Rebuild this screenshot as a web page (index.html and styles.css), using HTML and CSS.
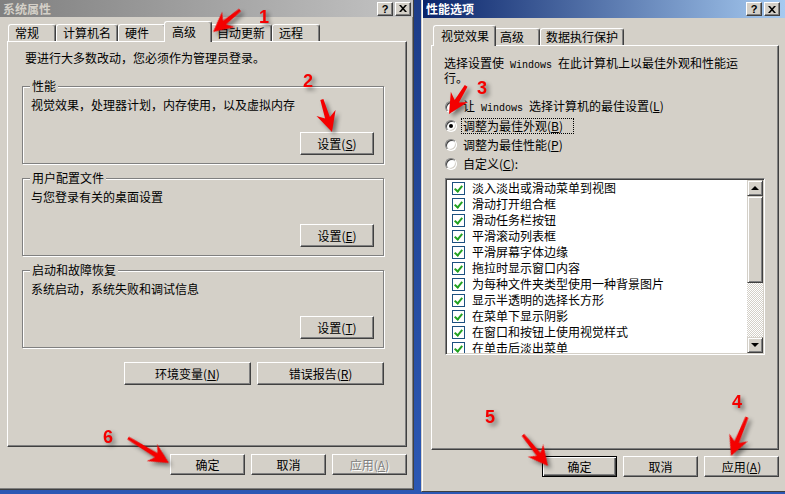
FILE: index.html
```html
<!DOCTYPE html>
<html lang="zh-CN">
<head>
    <meta charset="UTF-8">
    <title>系统属性 - 性能选项</title>
    <link rel="stylesheet" href="styles.css">
</head>
<body>
    <div class="desktop">
        <!-- left dialog: 系统属性 (inactive) -->
        <div class="window sys">
            <div class="titlebar">
                <span class="title">系统属性</span>
                <span class="cap-btn">?</span>
                <span class="cap-btn"><svg width="8" height="7" viewBox="0 0 8 7"><path d="M0 0h2l2 2.3L6 0h2L5 3.5 8 7H6L4 4.7 2 7H0l3-3.5z"/></svg></span>
            </div>
            <div class="tabs">
                <span class="tab">常规</span>
                <span class="tab">计算机名</span>
                <span class="tab">硬件</span>
                <span class="tab active">高级</span>
                <span class="tab">自动更新</span>
                <span class="tab">远程</span>
            </div>
            <div class="panel">
                <p class="note">要进行大多数改动，您必须作为管理员登录。</p>
                <fieldset class="group">
                    <legend>性能</legend>
                    <p>视觉效果，处理器计划，内存使用，以及虚拟内存</p>
                    <div class="actions"><button class="btn">设置(<u>S</u>)</button></div>
                </fieldset>
                <fieldset class="group">
                    <legend>用户配置文件</legend>
                    <p>与您登录有关的桌面设置</p>
                    <div class="actions"><button class="btn">设置(<u>E</u>)</button></div>
                </fieldset>
                <fieldset class="group">
                    <legend>启动和故障恢复</legend>
                    <p>系统启动，系统失败和调试信息</p>
                    <div class="actions"><button class="btn">设置(<u>T</u>)</button></div>
                </fieldset>
                <div class="row-btns">
                    <button class="btn wide">环境变量(<u>N</u>)</button>
                    <button class="btn wide">错误报告(<u>R</u>)</button>
                </div>
            </div>
            <div class="footer">
                <button class="btn">确定</button>
                <button class="btn">取消</button>
                <button class="btn" disabled>应用(<u>A</u>)</button>
            </div>
        </div>

        <!-- right dialog: 性能选项 (active) -->
        <div class="window perf">
            <div class="titlebar">
                <span class="title">性能选项</span>
                <span class="cap-btn">?</span>
                <span class="cap-btn"><svg width="8" height="7" viewBox="0 0 8 7"><path d="M0 0h2l2 2.3L6 0h2L5 3.5 8 7H6L4 4.7 2 7H0l3-3.5z"/></svg></span>
            </div>
            <div class="tabs">
                <span class="tab active">视觉效果</span>
                <span class="tab">高级</span>
                <span class="tab">数据执行保护</span>
            </div>
            <div class="panel">
                <p class="intro">选择设置使<span class="lat"> Windows </span>在此计算机上以最佳外观和性能运行。</p>
                <div class="options">
                    <div class="option"><span class="radio"></span><span>让<span class="lat"> Windows </span>选择计算机的最佳设置(<u>L</u>)</span></div>
                    <div class="option"><span class="radio checked"></span><span class="focus">调整为最佳外观(<u>B</u>)</span></div>
                    <div class="option"><span class="radio"></span><span>调整为最佳性能(<u>P</u>)</span></div>
                    <div class="option"><span class="radio"></span><span>自定义(<u>C</u>):</span></div>
                </div>
                <div class="list">
                    <div class="items">
                        <div class="item"><span class="cb"></span>淡入淡出或滑动菜单到视图</div>
                        <div class="item"><span class="cb"></span>滑动打开组合框</div>
                        <div class="item"><span class="cb"></span>滑动任务栏按钮</div>
                        <div class="item"><span class="cb"></span>平滑滚动列表框</div>
                        <div class="item"><span class="cb"></span>平滑屏幕字体边缘</div>
                        <div class="item"><span class="cb"></span>拖拉时显示窗口内容</div>
                        <div class="item"><span class="cb"></span>为每种文件夹类型使用一种背景图片</div>
                        <div class="item"><span class="cb"></span>显示半透明的选择长方形</div>
                        <div class="item"><span class="cb"></span>在菜单下显示阴影</div>
                        <div class="item"><span class="cb"></span>在窗口和按钮上使用视觉样式</div>
                        <div class="item"><span class="cb"></span>在单击后淡出菜单</div>
                    </div>
                    <div class="scrollbar">
                        <span class="sb-btn up"></span>
                        <span class="thumb"></span>
                        <span class="track"></span>
                        <span class="sb-btn down"></span>
                    </div>
                </div>
            </div>
            <div class="footer">
                <button class="btn default">确定</button>
                <button class="btn">取消</button>
                <button class="btn">应用(<u>A</u>)</button>
            </div>
        </div>
    </div>

    <!-- red step markers drawn over both dialogs -->
    <svg class="marks" width="785" height="494" viewBox="0 0 785 494">
        <g class="arrows">
            <polygon transform="translate(213 32) rotate(140.8)" points="0,0 -20,-10 -15,-2.5 -35,-1.6 -35,1.6 -15,2.5 -20,10"/>
            <polygon transform="translate(332 132) rotate(72.6)" points="0,0 -20,-10 -15,-2.5 -34,-1.6 -34,1.6 -15,2.5 -20,10"/>
            <polygon transform="translate(449 114) rotate(121.3)" points="0,0 -20,-10 -15,-2.5 -33,-1.6 -33,1.6 -15,2.5 -20,10"/>
            <polygon transform="translate(731 456) rotate(112.3)" points="0,0 -20,-10 -15,-2.5 -42,-1.6 -42,1.6 -15,2.5 -20,10"/>
            <polygon transform="translate(548 466) rotate(51.1)" points="0,0 -20,-10 -15,-2.5 -40,-1.6 -40,1.6 -15,2.5 -20,10"/>
            <polygon transform="translate(169 463) rotate(31.4)" points="0,0 -20,-10 -15,-2.5 -48,-1.6 -48,1.6 -15,2.5 -20,10"/>
            <text x="259" y="23">1</text>
            <text x="303" y="87">2</text>
            <text x="477" y="94">3</text>
            <text x="732" y="408">4</text>
            <text x="485" y="423">5</text>
            <text x="103" y="443">6</text>
        </g>
    </svg>
</body>
</html>
```

FILE: styles.css
```css
* {
    box-sizing: border-box;
}
body {
    margin: 0;
    width: 785px;
    height: 494px;
    overflow: hidden;
    position: relative;
    background: linear-gradient(to bottom, #1c3c88, #2c58b4);
    font: 12px/14px "Noto Sans CJK SC", sans-serif;
    color: #000;
}
.desktop {
    display: flex;
    align-items: flex-start;
    gap: 7px;
}

/* window frames */
.window {
    display: flex;
    flex-direction: column;
    background: #d4d0c8;
}
.sys {
    width: 414px;
    height: 490px;
    border-right: 1px solid #404040;
    border-bottom: 1px solid #404040;
    box-shadow: inset -1px -1px #808080;
}
.perf {
    width: 364px;
    height: 492px;
    border-left: 1px solid #d4d0c8;
    border-bottom: 1px solid #404040;
    padding-left: 1px;
    box-shadow: inset 1px 0 #fff;
}

/* title bars */
.titlebar {
    display: flex;
    align-items: center;
    gap: 2px;
    height: 17px;
    padding: 0 2px;
    font-weight: bold;
}
.sys .titlebar {
    background: linear-gradient(to right, #808080, #c4c4c4);
    color: #d4d0c8;
}
.perf .titlebar {
    height: 18px;
    padding-right: 5px;
    background: linear-gradient(to right, #0a246a, #a6caf0);
    color: #fff;
}
.title {
    flex: 1;
    padding-left: 1px;
}
.cap-btn {
    display: flex;
    align-items: center;
    justify-content: center;
    width: 16px;
    height: 14px;
    background: #d4d0c8;
    border: 1px solid;
    border-color: #fff #404040 #404040 #fff;
    box-shadow: inset -1px -1px #808080;
    color: #000;
    font: bold 11px/12px "Liberation Sans", sans-serif;
}

/* tabs */
.tabs {
    display: flex;
    align-items: flex-end;
    height: 20px;
    margin-top: 4px;
    padding-left: 8px;
}
.perf .tabs {
    margin-top: 7px;
    padding-left: 12px;
}
.tab {
    height: 17px;
    min-width: 48px;
    padding: 0 6px;
    line-height: 16px;
    white-space: nowrap;
    border: 1px solid #fff;
    border-bottom: 0;
    border-right-color: #404040;
    border-radius: 3px 3px 0 0;
    box-shadow: inset -1px 0 #808080;
}
.perf .tab {
    min-width: 46px;
    padding: 0 5px;
}
.tab.active,
.perf .tab.active {
    position: relative;
    z-index: 1;
    height: 21px;
    margin: 0 -2px -1px;
    padding: 3px 6px 0 7px;
    line-height: 14px;
    background: #d4d0c8;
}

/* tab page */
.panel {
    width: 400px;
    height: 406px;
    margin-left: 7px;
    padding: 9px 22px 0 14px;
    border: 1px solid;
    border-color: #fff #404040 #404040 #fff;
    box-shadow: inset -1px -1px #808080;
}
.perf .panel {
    width: 348px;
    height: 405px;
    margin-left: 8px;
    padding: 10px 12px 0 12px;
}
.note {
    margin: 0 0 0 3px;
}

/* group boxes */
.group {
    min-width: 0;
    margin: 14px 0 0;
    padding: 5px 9px 8px 8px;
    border: 1px solid #808080;
    box-shadow: inset 1px 1px #fff, 1px 1px #fff;
}
.group + .group {
    margin-top: 7px;
}
.group legend {
    margin-left: -1px;
    padding: 0 2px;
    background: #d4d0c8;
    line-height: 14px;
}
.group p {
    margin: 0;
}
.actions {
    display: flex;
    justify-content: flex-end;
    margin-top: 20px;
}
.row-btns {
    display: flex;
    justify-content: flex-end;
    gap: 6px;
    margin-top: 14px;
}

/* push buttons */
.btn {
    width: 74px;
    height: 23px;
    padding: 0;
    font: inherit;
    color: #000;
    background: #d4d0c8;
    border: 1px solid;
    border-color: #fff #404040 #404040 #fff;
    box-shadow: inset -1px -1px #808080;
}
.btn.wide {
    width: 127px;
}
.btn.default {
    border-color: #000;
    box-shadow: inset 1px 1px #fff, inset -1px -1px #404040, inset -2px -2px #808080;
}
.btn:disabled {
    color: #808080;
    text-shadow: 1px 1px #fff;
}
.footer {
    display: flex;
    justify-content: flex-end;
    gap: 6px;
    width: 400px;
    margin: 7px 0 0 7px;
}
.perf .footer {
    width: 348px;
    margin: 6px 0 0 8px;
}
.footer .btn {
    width: 75px;
    height: 21px;
}

/* performance options page */
.intro {
    width: 306px;
    margin: 0;
}
.lat {
    font: 10px "Liberation Mono", monospace;
}
.options {
    margin: 12px 0 0 1px;
}
.option {
    display: flex;
    align-items: center;
    gap: 6px;
    height: 19px;
    white-space: nowrap;
}
.radio {
    position: relative;
    flex: none;
    width: 12px;
    height: 12px;
    border-radius: 50%;
    background: #fff;
    border: 1px solid;
    border-color: #808080 #fff #fff #808080;
    box-shadow: inset 1px 1px #404040, inset -1px -1px #d4d0c8;
}
.radio.checked::after {
    content: "";
    position: absolute;
    left: 3px;
    top: 3px;
    width: 4px;
    height: 4px;
    border-radius: 50%;
    background: #000;
}
.focus {
    margin-left: -1px;
    padding: 0 10px 0 1px;
    outline: 1px dotted #000;
}

/* list with checkboxes */
.list {
    display: flex;
    width: 320px;
    height: 177px;
    margin: 5px 0 0 1px;
    padding: 1px;
    background: #fff;
    border: 1px solid;
    border-color: #808080 #fff #fff #808080;
    box-shadow: inset 1px 1px #404040, inset -1px -1px #d4d0c8;
}
.items {
    flex: 1;
    overflow: hidden;
    padding-left: 5px;
}
.item {
    display: flex;
    align-items: center;
    gap: 7px;
    height: 16px;
    white-space: nowrap;
}
.cb {
    position: relative;
    flex: none;
    width: 13px;
    height: 13px;
    background: #fff;
    border: 1px solid #1c5180;
}
.cb::after {
    content: "";
    position: absolute;
    left: 3px;
    top: 1px;
    width: 3px;
    height: 6px;
    border: solid #21a121;
    border-width: 0 2px 2px 0;
    transform: rotate(40deg);
}
.scrollbar {
    display: flex;
    flex-direction: column;
    width: 16px;
    background: repeating-conic-gradient(#fff 0 25%, #d4d0c8 0 50%) 0 0 / 2px 2px;
}
.sb-btn,
.thumb {
    display: flex;
    align-items: center;
    justify-content: center;
    height: 16px;
    background: #d4d0c8;
    border: 1px solid;
    border-color: #d4d0c8 #404040 #404040 #d4d0c8;
    box-shadow: inset 1px 1px #fff, inset -1px -1px #808080;
}
.thumb {
    height: 87px;
}
.track {
    flex: 1;
}
.sb-btn::after {
    content: "";
    border-left: 4px solid transparent;
    border-right: 4px solid transparent;
}
.sb-btn.up::after {
    border-bottom: 4px solid #000;
}
.sb-btn.down::after {
    border-top: 4px solid #000;
}

/* red annotations */
.marks {
    position: absolute;
    left: 0;
    top: 0;
    pointer-events: none;
}
.arrows {
    fill: #f40000;
    filter: drop-shadow(3px 3px 2px rgba(0, 0, 0, 0.45));
}
.arrows text {
    font: bold 18px "Liberation Sans", sans-serif;
}
```
